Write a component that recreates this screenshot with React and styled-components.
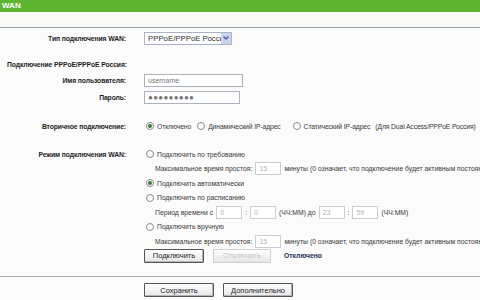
import styled, { createGlobalStyle } from "styled-components";

const GlobalStyle = createGlobalStyle`
  html, body {
    margin: 0;
    padding: 0;
    background: #fbfbfb;
  }
  body {
    width: 480px;
    height: 300px;
    overflow: hidden;
    font-family: "Liberation Sans", Arial, sans-serif;
    font-size: 6.8px;
    color: #3a3a3a;
  }
`;

const Header = styled.div`
  height: 12px;
  background: #5fb52f;
  color: #fff;
  font-weight: 700;
  font-size: 8px;
  line-height: 12px;
  padding-left: 2px;
`;

const SubBar = styled.div`
  height: 15px;
  background: #f9faf8;
  border-bottom: 1px solid #98aaa2;
`;

const Form = styled.div`
  display: flex;
  flex-direction: column;
  padding-top: 3px;
`;

const Row = styled.div`
  display: grid;
  grid-template-columns: 126px 1fr;
  column-gap: 18px;
  align-items: center;
  height: ${(p) => p.$h || 14}px;
  margin-top: ${(p) => p.$mt || 0}px;
  white-space: nowrap;
`;

const Label = styled.div`
  text-align: right;
  font-weight: 700;
  color: #1e1e1e;
  letter-spacing: -0.1px;
`;

const SectionTitle = styled.div`
  font-weight: 700;
  color: #1e1e1e;
  padding-left: 7px;
  height: 14px;
  line-height: 14px;
  margin-top: 13px;
  letter-spacing: -0.1px;
`;

const Line = styled.div`
  display: flex;
  align-items: center;
  gap: ${(p) => p.$gap || 4}px;
  padding-left: ${(p) => p.$indent || 0}px;
  letter-spacing: ${(p) => p.$ls || 0}px;
`;

const Select = styled.div`
  display: flex;
  align-items: center;
  width: 88px;
  height: 13px;
  border: 1px solid #a8b4c4;
  background: #fff;
  font-size: 7.8px;
  color: #333;
  padding-left: 3px;
  box-sizing: border-box;
  justify-content: space-between;
  overflow: hidden;
`;

const SelectText = styled.span`
  overflow: hidden;
  flex: 1;
`;

const SelectArrow = styled.span`
  flex: none;
  width: 10px;
  height: 11px;
  background: #c8d4f0;
  display: flex;
  align-items: center;
  justify-content: center;
`;

const TextInput = styled.div`
  width: ${(p) => p.$w}px;
  height: 13px;
  box-sizing: border-box;
  border: 1px solid ${(p) => (p.$disabled ? "#c9ced4" : "#a9b2bd")};
  background: #fff;
  color: ${(p) => (p.$disabled ? "#b4b4b4" : "#777")};
  font-size: ${(p) => (p.$dots ? 8 : 7)}px;
  font-weight: ${(p) => (p.$dots ? 700 : 400)};
  line-height: 11px;
  padding-left: 3px;
  letter-spacing: ${(p) => (p.$dots ? "0.3px" : "0")};
`;

const RadioItem = styled.label`
  display: inline-flex;
  align-items: center;
  gap: 3px;
  margin-right: ${(p) => p.$mr || 0}px;
`;

const RadioDot = styled.span`
  width: 8px;
  height: 8px;
  border-radius: 50%;
  box-sizing: border-box;
  border: 1px solid #8a8a8a;
  background: #fff;
  display: inline-flex;
  align-items: center;
  justify-content: center;

  &::after {
    content: "";
    width: 4px;
    height: 4px;
    border-radius: 50%;
    background: ${(p) => (p.$checked ? "#3c7a2c" : "transparent")};
  }
`;

const Button = styled.button`
  font-family: inherit;
  font-size: 7.5px;
  height: 14px;
  width: ${(p) => p.$w}px;
  padding: 0;
  border: 1px solid ${(p) => (p.$disabled ? "#cfcfcf" : "#555")};
  border-radius: 1px;
  background: linear-gradient(#ffffff, #e6e6e6);
  color: ${(p) => (p.$disabled ? "#c4c4c4" : "#222")};
  box-shadow: ${(p) => (p.$disabled ? "none" : "inset -1px -1px 0 #b5b5b5")};
`;

const Status = styled.span`
  font-weight: 700;
  color: #1f2d58;
  margin-left: 4px;
`;

const Divider = styled.div`
  border-top: 1px solid #a7a7a7;
  margin-top: 13px;
`;

const Footer = styled.div`
  display: flex;
  gap: 9px;
  padding-left: 144px;
  margin-top: 6px;
`;

function Radio({ checked, children, mr }) {
  return (
    <RadioItem $mr={mr}>
      <RadioDot $checked={checked} />
      {children}
    </RadioItem>
  );
}

const idleText = "минуты (0 означает, что подключение будет активным постоянно)";

export default function App() {
  return (
    <>
      <GlobalStyle />
      <Header>WAN</Header>
      <SubBar />
      <Form>
        <Row $mt={0}>
          <Label>Тип подключения WAN:</Label>
          <Select>
            <SelectText>PPPoE/PPPoE Россия</SelectText>
            <SelectArrow>
              <svg width="6" height="4" viewBox="0 0 6 4">
                <path d="M0.5 0.5 L3 3 L5.5 0.5" stroke="#4a5c8c" strokeWidth="1.3" fill="none" />
              </svg>
            </SelectArrow>
          </Select>
        </Row>

        <SectionTitle>Подключение PPPoE/PPPoE Россия:</SectionTitle>

        <Row $mt={1}>
          <Label>Имя пользователя:</Label>
          <TextInput $w={99}>username</TextInput>
        </Row>
        <Row $mt={3}>
          <Label>Пароль:</Label>
          <TextInput $w={96} $dots>●●●●●●●●●</TextInput>
        </Row>

        <Row $mt={15}>
          <Label>Вторичное подключение:</Label>
          <Line $indent={2} $gap={3} $ls={-0.12}>
            <Radio checked mr={3}>Отключено</Radio>
            <Radio mr={9}>Динамический IP-адрес</Radio>
            <Radio mr={2}>Статический IP-адрес</Radio>
            <span>(Для Dual Access/PPPoE Россия)</span>
          </Line>
        </Row>

        <Row $mt={14}>
          <Label>Режим подключения WAN:</Label>
          <Line $indent={2}>
            <Radio>Подключить по требованию</Radio>
          </Line>
        </Row>
        <Row $h={15}>
          <span />
          <Line $indent={11} $gap={3}>
            <span>Максимальное время простоя:</span>
            <TextInput $w={26} $disabled>15</TextInput>
            <span>{idleText}</span>
          </Line>
        </Row>
        <Row>
          <span />
          <Line $indent={2}>
            <Radio checked>Подключить автоматически</Radio>
          </Line>
        </Row>
        <Row $h={15}>
          <span />
          <Line $indent={2}>
            <Radio>Подключить по расписанию</Radio>
          </Line>
        </Row>
        <Row $h={14}>
          <span />
          <Line $indent={11} $gap={3}>
            <span>Период времени с</span>
            <TextInput $w={26} $disabled>0</TextInput>
            <span>:</span>
            <TextInput $w={26} $disabled>0</TextInput>
            <span>(ЧЧ:ММ) до</span>
            <TextInput $w={26} $disabled>23</TextInput>
            <span>:</span>
            <TextInput $w={26} $disabled>59</TextInput>
            <span>(ЧЧ:ММ)</span>
          </Line>
        </Row>
        <Row $h={15}>
          <span />
          <Line $indent={2}>
            <Radio>Подключить вручную</Radio>
          </Line>
        </Row>
        <Row $h={14}>
          <span />
          <Line $indent={11} $gap={3}>
            <span>Максимальное время простоя:</span>
            <TextInput $w={26} $disabled>15</TextInput>
            <span>{idleText}</span>
          </Line>
        </Row>
        <Row $h={15}>
          <span />
          <Line $gap={9}>
            <Button $w={60}>Подключить</Button>
            <Button $w={58} $disabled>Отключить</Button>
            <Status>Отключено</Status>
          </Line>
        </Row>
      </Form>
      <Divider />
      <Footer>
        <Button $w={70}>Сохранить</Button>
        <Button $w={70}>Дополнительно</Button>
      </Footer>
    </>
  );
}
